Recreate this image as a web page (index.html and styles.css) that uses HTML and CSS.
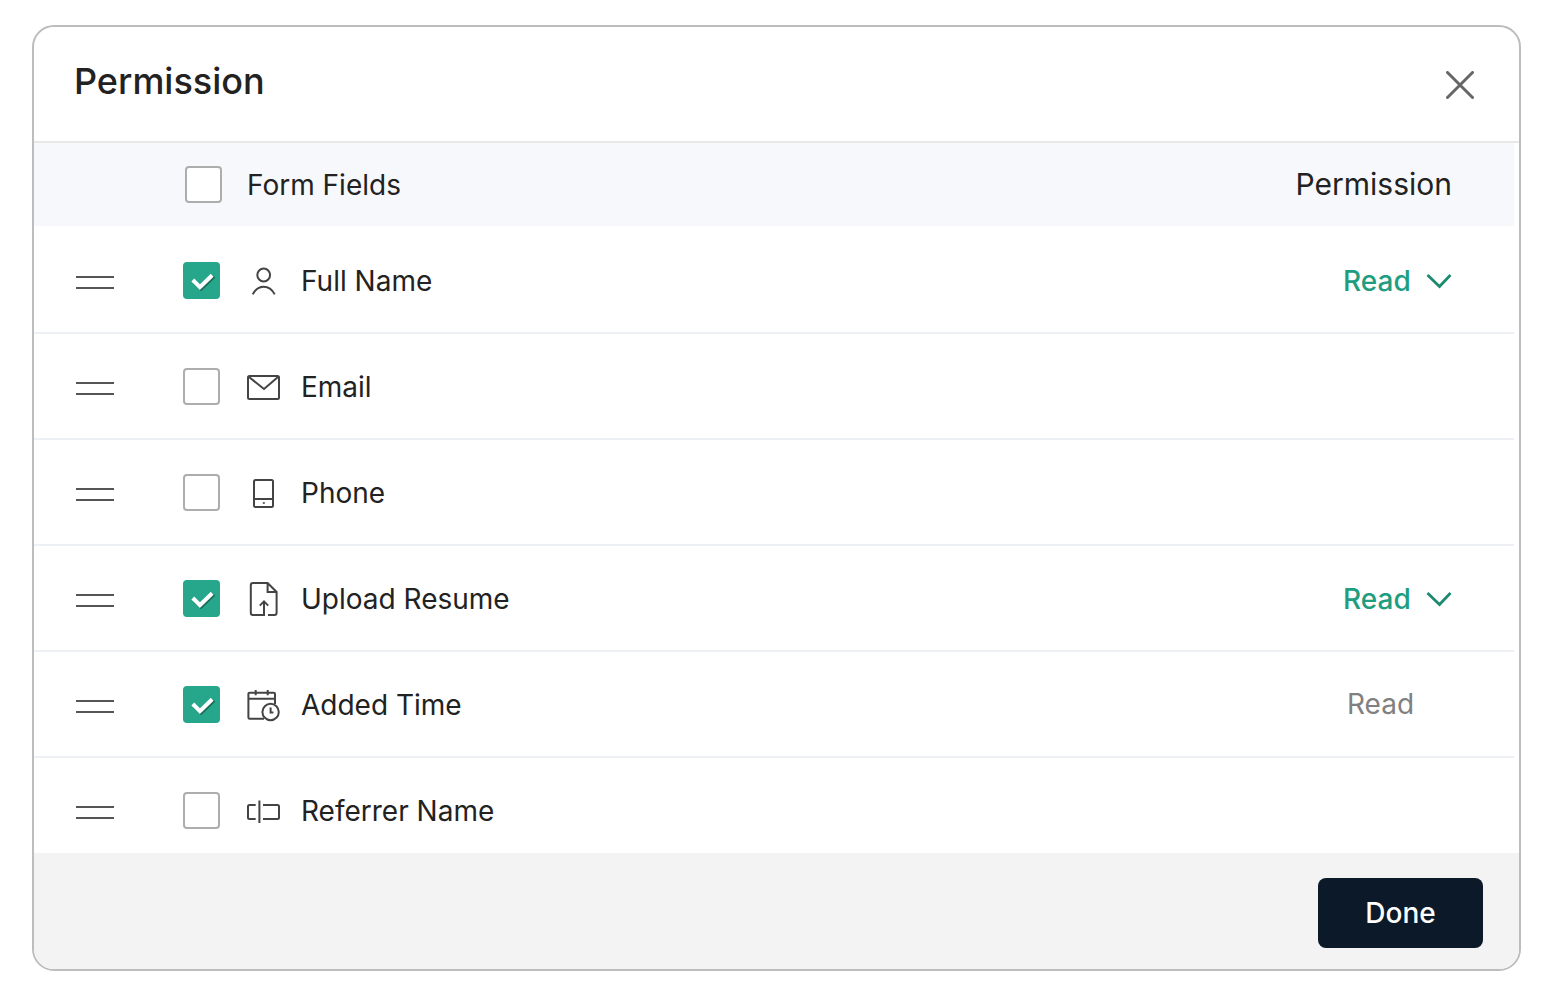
FILE: index.html
```html
<!DOCTYPE html>
<html lang="en">
<head>
<meta charset="utf-8">
<meta name="viewport" content="width=device-width, initial-scale=1">
<title>Permission</title>
<link rel="stylesheet" href="styles.css">
</head>
<body>
<svg class="sprite" aria-hidden="true">
  <symbol id="tick" viewBox="0 0 37 37">
    <path d="M11 20.2 18 26.7 31 14.5" fill="none" stroke="#1a6c59" stroke-width="3.6"/>
    <path d="M9.8 18 16.9 25.2 29.2 13.2" fill="none" stroke="#fff" stroke-width="4"/>
  </symbol>
  <symbol id="grip" viewBox="0 0 38 13">
    <path d="M0 1H38M0 12H38" stroke="#555" stroke-width="2"/>
  </symbol>
  <symbol id="chevron" viewBox="0 0 26 16">
    <path d="M1.5 2 13.5 13.5 24.5 2" fill="none" stroke="#1d8a70" stroke-width="2.8"/>
  </symbol>
</svg>
<main class="dialog" role="dialog" aria-labelledby="dialog-title">
  <header class="dialog-header">
    <h1 class="dialog-title" id="dialog-title">Permission</h1>
    <button class="close" type="button" aria-label="Close">
      <svg class="close-icon" viewBox="0 0 28 28"><path d="M1.5 1.5 26.5 26.5M26.5 1.5 1.5 26.5" stroke="#666" stroke-width="3" stroke-linecap="round"/></svg>
    </button>
  </header>

  <div class="dialog-body">
    <table class="fields">
      <thead>
        <tr>
          <th class="col-grip"></th>
          <th class="col-field" scope="col">
            <label class="field field-all">
              <span class="check"><input class="check-input" type="checkbox"><svg class="check-tick"><use href="#tick"/></svg></span>
              <span class="field-name">Form Fields</span>
            </label>
          </th>
          <th class="col-permission" scope="col">Permission</th>
        </tr>
      </thead>
      <tbody>
        <tr>
          <td class="col-grip"><svg class="grip"><use href="#grip"/></svg></td>
          <td class="col-field">
            <label class="field">
              <span class="check"><input class="check-input" type="checkbox" checked><svg class="check-tick"><use href="#tick"/></svg></span>
              <svg class="icon" viewBox="0 0 34 36"><circle cx="16.7" cy="12" r="6.4"/><path d="M5.7 31.4C11 21.2 22.4 21.2 27.7 31.4"/></svg>
              <span class="field-name">Full Name</span>
            </label>
          </td>
          <td class="col-permission">
            <span class="picker"><select class="picker-select" aria-label="Full Name permission"><option>Read</option></select><svg class="picker-arrow"><use href="#chevron"/></svg></span>
          </td>
        </tr>
        <tr>
          <td class="col-grip"><svg class="grip"><use href="#grip"/></svg></td>
          <td class="col-field">
            <label class="field">
              <span class="check"><input class="check-input" type="checkbox"><svg class="check-tick"><use href="#tick"/></svg></span>
              <svg class="icon" viewBox="0 0 34 36"><rect x="1" y="7" width="31" height="23" rx="1.5"/><path d="M2 8 17 20 31 8"/></svg>
              <span class="field-name">Email</span>
            </label>
          </td>
          <td class="col-permission"></td>
        </tr>
        <tr>
          <td class="col-grip"><svg class="grip"><use href="#grip"/></svg></td>
          <td class="col-field">
            <label class="field">
              <span class="check"><input class="check-input" type="checkbox"><svg class="check-tick"><use href="#tick"/></svg></span>
              <svg class="icon" viewBox="0 0 34 36"><rect x="7" y="5" width="19" height="27" rx="1.5"/><path d="M7 24H26"/><path d="M15.8 28h2" stroke-width="1.6"/></svg>
              <span class="field-name">Phone</span>
            </label>
          </td>
          <td class="col-permission"></td>
        </tr>
        <tr>
          <td class="col-grip"><svg class="grip"><use href="#grip"/></svg></td>
          <td class="col-field">
            <label class="field">
              <span class="check"><input class="check-input" type="checkbox" checked><svg class="check-tick"><use href="#tick"/></svg></span>
              <svg class="icon" viewBox="0 0 34 36"><path d="M17 20.5V34H6Q3.8 34 3.8 31.8V4.2Q3.8 2 6 2H20.6L29.6 11V31.8Q29.6 34 27.4 34H21M20.6 2V11H29.6M12.8 24.6 17 20.4 21.2 24.6"/></svg>
              <span class="field-name">Upload Resume</span>
            </label>
          </td>
          <td class="col-permission">
            <span class="picker"><select class="picker-select" aria-label="Upload Resume permission"><option>Read</option></select><svg class="picker-arrow"><use href="#chevron"/></svg></span>
          </td>
        </tr>
        <tr>
          <td class="col-grip"><svg class="grip"><use href="#grip"/></svg></td>
          <td class="col-field">
            <label class="field">
              <span class="check"><input class="check-input" type="checkbox" checked><svg class="check-tick"><use href="#tick"/></svg></span>
              <svg class="icon" viewBox="0 0 34 36"><path d="M28 17V7Q28 5.7 26.7 5.7H2.7Q1.4 5.7 1.4 7V30.4Q1.4 31.7 2.7 31.7H17M1.4 11.7H28M8.7 3V8.2M20.7 3V8.2M23.6 20.5V25.6H26.4"/><circle cx="23.6" cy="25" r="8.2"/></svg>
              <span class="field-name">Added Time</span>
            </label>
          </td>
          <td class="col-permission"><span class="fixed">Read</span></td>
        </tr>
        <tr>
          <td class="col-grip"><svg class="grip"><use href="#grip"/></svg></td>
          <td class="col-field">
            <label class="field">
              <span class="check"><input class="check-input" type="checkbox"><svg class="check-tick"><use href="#tick"/></svg></span>
              <svg class="icon" viewBox="0 0 34 36"><path d="M8.7 12H2.5Q1 12 1 13.5V24.5Q1 26 2.5 26H8.7M16 12H30.5Q32 12 32 13.5V24.5Q32 26 30.5 26H16M12.4 7.5V30"/></svg>
              <span class="field-name">Referrer Name</span>
            </label>
          </td>
          <td class="col-permission"></td>
        </tr>
      </tbody>
    </table>
  </div>

  <footer class="dialog-footer">
    <button class="done" type="button">Done</button>
  </footer>
</main>
</body>
</html>
```

FILE: styles.css
```css
* {
  box-sizing: border-box;
}

body {
  margin: 0;
  height: 100vh;
  padding: 25px 32px;
  display: flex;
  flex-direction: column;
  background: #fff;
  color: #222;
  font-family: Inter, "Liberation Sans", sans-serif;
  font-size: 28px;
  line-height: 36px;
}

.sprite {
  position: absolute;
  width: 0;
  height: 0;
}

.dialog {
  flex: 1;
  min-height: 0;
  display: flex;
  flex-direction: column;
  overflow: hidden;
  border: 2px solid #bdbdbd;
  border-radius: 22px;
  background: #fff;
}

.dialog-header {
  display: flex;
  align-items: center;
  justify-content: space-between;
  padding: 30px 45px 36px 40px;
  border-bottom: 2px solid #e8e8e8;
}

.dialog-title {
  margin: 0;
  font-size: 36px;
  font-weight: 500;
  line-height: 48px;
}

.close {
  padding: 8px 0 0;
  border: 0;
  background: none;
  cursor: pointer;
}

.close-icon {
  display: block;
  width: 28px;
  height: 28px;
}

.dialog-body {
  flex: 1;
  min-height: 0;
  padding-right: 5px;
  overflow-y: auto;
  scrollbar-width: none;
}

.fields {
  width: 100%;
  border-collapse: separate;
  border-spacing: 0;
}

.fields th {
  height: 83px;
  padding: 0 0 1px;
  background: #f7f8fc;
  font-weight: 400;
  text-align: left;
}

.fields td {
  height: 106px;
  padding: 0;
  border-bottom: 2px solid #edf1f5;
}

.fields tbody tr:first-child td {
  height: 108px;
  padding-top: 2px;
}

.fields .col-grip {
  width: 149px;
  padding-left: 42px;
}

.fields th.col-field {
  padding-left: 2px;
}

.fields .col-permission {
  padding-right: 62px;
  text-align: right;
}

.fields th.col-permission {
  font-size: 30px;
}

.grip {
  display: block;
  width: 38px;
  height: 13px;
  margin-top: 4px;
}

.field {
  display: inline-flex;
  align-items: center;
  vertical-align: middle;
}

.check {
  display: grid;
  margin-right: 27px;
}

.field-all .check {
  margin-right: 25px;
}

.check-input,
.check-tick {
  grid-area: 1 / 1;
  width: 37px;
  height: 37px;
}

.check-input {
  margin: 0;
  appearance: none;
  border: 2px solid #adadad;
  border-radius: 4px;
  background: #fff;
}

.check-input:checked {
  border-color: #26a68a;
  background: #26a68a;
}

.check-tick {
  z-index: 1;
  visibility: hidden;
  pointer-events: none;
}

.check-input:checked + .check-tick {
  visibility: visible;
}

.icon {
  width: 34px;
  height: 36px;
  margin-right: 20px;
  fill: none;
  stroke: #444;
  stroke-width: 2;
}

.picker {
  display: inline-grid;
  width: 109px;
  align-items: center;
  vertical-align: middle;
}

.picker-select,
.picker-arrow {
  grid-area: 1 / 1;
}

.picker-select {
  width: 100%;
  padding: 0;
  appearance: none;
  border: 0;
  background: none;
  color: #1f9d80;
  font: inherit;
  font-weight: 500;
}

.picker-arrow {
  justify-self: end;
  width: 26px;
  height: 16px;
  pointer-events: none;
}

.fixed {
  display: inline-block;
  width: 105px;
  color: #808080;
  text-align: left;
}

.dialog-footer {
  display: flex;
  justify-content: flex-end;
  padding: 25px 36px 21px;
  background: #f3f3f3;
}

.done {
  min-width: 165px;
  height: 70px;
  border: 0;
  border-radius: 8px;
  background: #0c1929;
  color: #fff;
  font: inherit;
  font-weight: 500;
  cursor: pointer;
}
```
